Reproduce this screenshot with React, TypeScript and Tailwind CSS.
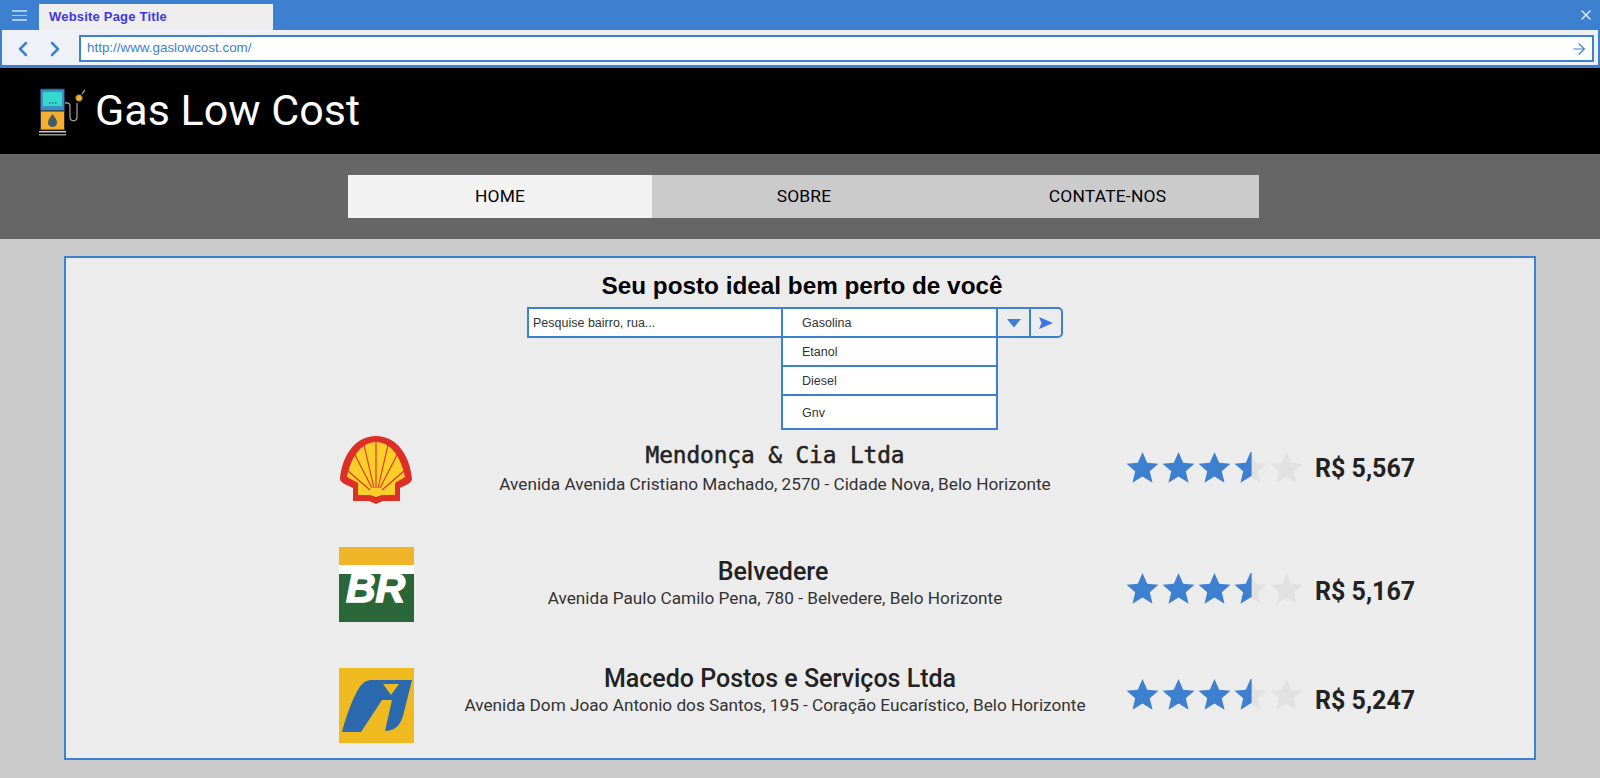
import type React from "react"
import { ArrowRight, ChevronLeft, ChevronRight, X } from "lucide-react"

const fuelOptions = [
    { label: "Etanol", height: "h-[29px]", pt: "pt-[2px]" },
    { label: "Diesel", height: "h-[29px]", pt: "pt-[2px]" },
    { label: "Gnv", height: "h-[34px]", pt: "pt-[2px]" },
]

const ShellLogo = () => (
    <svg viewBox="0 0 72 68" className="w-[72px] h-[68px] ml-[1px]">
        <path d="M36 0C15 0 2 20 0 43c0 3 4 5 13 9v13h16l7 3 7-3h17V52c9-4 12-6 12-9C70 20 57 0 36 0z" fill="#dc2f27" />
        <path d="M36 6C22 6 11 20 7 41l11 6v12h12l6 2 6-2h13V47l10-6C61 20 50 6 36 6z" fill="#fbce2a" />
        <g stroke="#dc2f27" strokeWidth="1.1" fill="none">
            <path d="M36 52V6" />
            <path d="M34 52 24 9" />
            <path d="M32 52 14 17" />
            <path d="M30 54 8 35" />
            <path d="M38 52 48 9" />
            <path d="M40 52 58 17" />
            <path d="M42 54 64 35" />
        </g>
    </svg>
)

const BrLogo = () => (
    <div className="relative w-[75px] h-[75px] flex flex-col bg-white">
        <div className="h-[18px] bg-[#f0b429]" />
        <div className="h-[9px]" />
        <div className="flex-1 bg-[#2a6637]" />
        <span className="absolute left-[7px] top-[23px] text-white text-[41px] leading-[37px] italic font-bold font-['Liberation_Sans',sans-serif] [-webkit-text-stroke:1.5px_white]">BR</span>
    </div>
)

const IpirangaLogo = () => (
    <svg viewBox="0 0 75 75" className="w-[75px] h-[75px]">
        <rect width="75" height="75" fill="#efb920" />
        <path d="M3 64C8 45 14 30 20 20c4-6 8-8 13-8h40l-9 36c-3 10-9 15-18 15l7-31H43L22 64z" fill="#2a69ad" />
        <path d="M44 16h16l-8 11z" fill="#efb920" />
    </svg>
)

const PumpIcon = () => (
    <svg viewBox="0 0 48 48" className="w-[48px] h-[48px] ml-[1px]">
        <rect x="1.5" y="1" width="24" height="22" rx="1" fill="#3c8fc4" stroke="#1d3f5c" />
        <rect x="4" y="4" width="19" height="14" fill="#34d8cc" />
        <path d="M10 15h1.5M13 15h1.5M16 15h1.5" stroke="#1d3f5c" strokeWidth="1" />
        <rect x="1.5" y="23" width="24" height="19" fill="#f6ae2d" stroke="#33302c" />
        <path d="M13.5 26c3 4 4.5 6 4.5 8.5a4.5 4.5 0 0 1-9 0c0-2.500 1.500-4.500 4.500-8.500z" fill="#455a64" />
        <rect x="0" y="43" width="27" height="1.500" fill="#c9c9c9" />
        <rect x="0" y="46" width="27" height="1.500" fill="#9a9a9a" />
        <path d="M26 15h2c2 0 3 1 3 3v11c0 5 7 5 7 0V15" stroke="#9a9a9a" strokeWidth="1.300" fill="none" />
        <circle cx="40" cy="10" r="3.500" fill="#f6ae2d" stroke="#33302c" strokeWidth="0.800" />
        <path d="M43 6l3-4" stroke="#9a9a9a" strokeWidth="1.300" />
    </svg>
)

const Star = ({ half = false, empty = false }: { half?: boolean; empty?: boolean }) => (
    <svg viewBox="0 0 24 24" className="w-[33px] h-[33px]">
        <polygon
            points="12,0.8 15.4,8.6 23.6,9.3 17.3,14.8 19.3,23 12,18.6 4.7,23 6.7,14.8 0.4,9.3 8.6,8.6"
            fill={empty || half ? "#e1e1e1" : "#3c80cf"}
        />
        {half && <polygon points="12.8,0.8 12.8,18.2 12,18.6 4.7,23 6.7,14.8 0.4,9.3 8.6,8.6 12,0.8" fill="#3c80cf" />}
    </svg>
)

const Rating = () => (
    <div className="flex gap-[3px]">
        <Star />
        <Star />
        <Star />
        <Star half />
        <Star empty />
    </div>
)

const Station = ({
    logo,
    name,
    nameClass,
    address,
    addressClass,
    rowClass,
    textClass,
    ratingClass,
    priceClass,
    price,
}: {
    logo: React.ReactNode
    name: string
    nameClass: string
    address: string
    addressClass: string
    rowClass: string
    textClass: string
    ratingClass: string
    priceClass: string
    price: string
}) => (
    <div className={`flex items-start ${rowClass}`}>
        <div className="w-[76px] pl-[1px]">{logo}</div>
        <div className={`w-[700px] ml-[11px] flex flex-col items-center ${textClass}`}>
            <div className={nameClass}>{name}</div>
            <div className={`text-[17.2px] leading-[20px] text-[#333] ${addressClass}`}>{address}</div>
        </div>
        <div className={`ml-[1px] ${ratingClass}`}>
            <Rating />
        </div>
        <span className={`ml-[12px] text-[25px] leading-[32px] font-bold text-[#222] ${priceClass}`}>{price}</span>
    </div>
)

export default function App() {
    return (
        <div className="w-full h-[778px] overflow-hidden flex flex-col bg-[#cccccc] font-['Roboto',sans-serif]">
            {/* Browser frame */}
            <div className="bg-[#3c80cf] h-[30px] flex items-end shrink-0 pr-[6px]">
                <div className="w-[39px] h-full flex flex-col items-center justify-center gap-[3px] pt-[1px]">
                    <div className="w-[15px] h-[1.5px] bg-[#a9cbf0]" />
                    <div className="w-[15px] h-[1.5px] bg-[#a9cbf0]" />
                    <div className="w-[15px] h-[1.5px] bg-[#a9cbf0]" />
                </div>
                <div className="w-[234px] h-[26px] bg-[#eeeeee] flex items-center pl-[10px] text-[13px] tracking-[0.2px] font-bold text-[#4038e0] font-['Liberation_Sans',sans-serif]">
                    Website Page Title
                </div>
                <div className="flex-1 h-full flex items-center justify-end">
                    <X size={16} strokeWidth={2} className="text-[#e4eefa]" />
                </div>
            </div>
            <div className="h-[38px] shrink-0 bg-[#eef2f8] border-x-2 border-b-[3px] border-[#3c80cf] flex items-center pt-[2px] pl-[9px] pr-[4px]">
                <ChevronLeft size={24} strokeWidth={2.5} className="text-[#3c80cf]" />
                <ChevronRight size={24} strokeWidth={2.5} className="text-[#3c80cf] ml-[8px]" />
                <div className="ml-[12px] flex-1 h-[27px] bg-white border-2 border-[#3c80cf] flex items-center justify-between pl-[6px] pr-[4px] text-[13.4px] text-[#3c80cf] font-['Liberation_Sans',sans-serif]">
                    <span>http://www.gaslowcost.com/</span>
                    <ArrowRight size={18} strokeWidth={1.5} />
                </div>
            </div>

            {/* Header */}
            <header className="h-[86px] shrink-0 bg-black flex items-center pl-[38px] pt-[2px]">
                <PumpIcon />
                <h1 className="ml-[8px] -mt-[3px] text-[43px] leading-none text-white font-normal">Gas Low Cost</h1>
            </header>

            {/* Nav */}
            <nav className="h-[85px] shrink-0 bg-[#666666] flex items-center justify-center">
                <div className="w-[911px] h-[43px] bg-[#cbcbcb] flex text-[17.4px] tracking-[0.2px] font-normal text-black ml-[7px]">
                    <div className="w-[304px] bg-[#f2f2f2] flex items-center justify-center">HOME</div>
                    <div className="w-[304px] flex items-center justify-center">SOBRE</div>
                    <div className="w-[303px] flex items-center justify-center">CONTATE-NOS</div>
                </div>
            </nav>

            {/* Content */}
            <main className="flex-1 pt-[17px] px-[64px]">
                <section className="w-[1472px] h-[504px] border-2 border-[#3c80cf] bg-[#ececec] flex flex-col">
                    <h2 className="mt-[14px] pl-[4px] text-center text-[24.3px] leading-[28px] font-bold text-black font-['Liberation_Sans',sans-serif]">
                        Seu posto ideal bem perto de você
                    </h2>
                    <div className="relative mt-[7px] ml-[461px] w-[536px] h-[31px] flex text-[12.5px] text-[#333] font-['Liberation_Sans',sans-serif]">
                        <div className="w-[254px] bg-white border-2 border-r-0 border-[#3c80cf] flex items-center pl-[4px] pt-[2px]">Pesquise bairro, rua...</div>
                        <div className="w-[217px] bg-white border-2 border-[#3c80cf] flex items-center pl-[19px] pt-[2px]">Gasolina</div>
                        <div className="w-[31px] border-y-2 border-[#3c80cf] flex items-center justify-center">
                            <svg viewBox="0 0 14 10" className="w-[14px] h-[10px]">
                                <path d="M0 1h14L7 9.5z" fill="#3c80cf" />
                            </svg>
                        </div>
                        <div className="w-[34px] border-2 border-[#3c80cf] rounded-r-[5px] flex items-center justify-center">
                            <svg viewBox="0 0 14 12" className="w-[14px] h-[12px]">
                                <path d="M0 0l14 6-14 6 2.5-6z" fill="#3f73e8" />
                            </svg>
                        </div>
                        {/* Dropdown */}
                        <div className="absolute left-[254px] top-[31px] w-[217px] bg-white border-x-2 border-[#3c80cf] flex flex-col">
                            {fuelOptions.map((option) => (
                                <div key={option.label} className={`${option.height} ${option.pt} border-b-2 border-[#3c80cf] flex items-center pl-[19px]`}>
                                    {option.label}
                                </div>
                            ))}
                        </div>
                    </div>

                    {/* Stations */}
                    <div className="ml-[272px] flex flex-col">
                        <Station
                            logo={<ShellLogo />}
                            name="Mendonça & Cia Ltda"
                            nameClass="text-[22.8px] leading-[28px] font-medium text-[#222] font-['DejaVu_Sans_Mono',monospace] tracking-[-0.1px] [-webkit-text-stroke:0.5px_#222]"
                            address="Avenida Avenida Cristiano Machado, 2570 - Cidade Nova, Belo Horizonte"
                            addressClass="mt-[5px]"
                            rowClass="mt-[98px] h-[111px]"
                            textClass="pt-[5px]"
                            ratingClass="pt-[15px]"
                            priceClass="pt-[17px]"
                            price="R$ 5,567"
                        />
                        <Station
                            logo={<BrLogo />}
                            name="Belvedere"
                            nameClass="mr-[4px] text-[25px] leading-[28px] font-medium text-[#222]"
                            address="Avenida Paulo Camilo Pena, 780 - Belvedere, Belo Horizonte"
                            addressClass="mt-[2px]"
                            rowClass="h-[121px]"
                            textClass="pt-[11px]"
                            ratingClass="pt-[25px]"
                            priceClass="pt-[29px]"
                            price="R$ 5,167"
                        />
                        <Station
                            logo={<IpirangaLogo />}
                            name="Macedo Postos e Serviços Ltda"
                            nameClass="ml-[10px] text-[25px] leading-[28px] font-medium text-[#222]"
                            address="Avenida Dom Joao Antonio dos Santos, 195 - Coração Eucarístico, Belo Horizonte"
                            addressClass="mt-[2px]"
                            rowClass="h-[75px]"
                            textClass="-mt-[3px]"
                            ratingClass="pt-[10px]"
                            priceClass="pt-[17px]"
                            price="R$ 5,247"
                        />
                    </div>
                </section>
            </main>
        </div>
    )
}
